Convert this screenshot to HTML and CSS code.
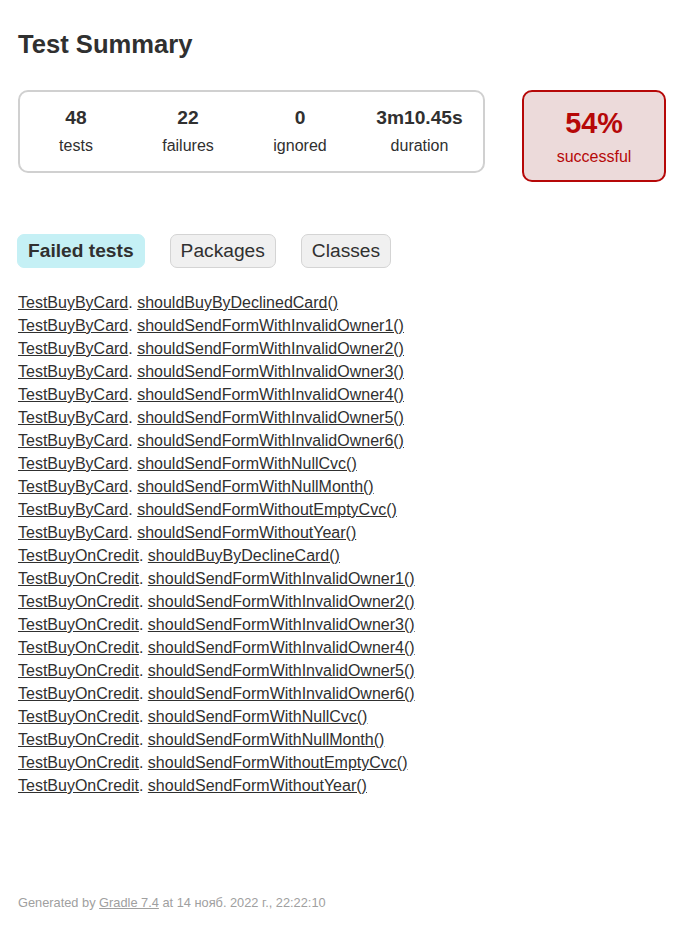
FILE: index.html
```html
<!DOCTYPE html>
<html>
<head>
<meta charset="utf-8">
<title>Test results - Test Summary</title>
<link rel="stylesheet" href="styles.css">
</head>
<body>
<div class="content">
  <h1 class="title">Test Summary</h1>
  <div class="summary">
    <div class="summary-group">
      <div class="info-box"><div class="counter">48</div><p class="label">tests</p></div>
      <div class="info-box"><div class="counter">22</div><p class="label">failures</p></div>
      <div class="info-box"><div class="counter">0</div><p class="label">ignored</p></div>
      <div class="info-box info-duration"><div class="counter">3m10.45s</div><p class="label">duration</p></div>
    </div>
    <div class="success-rate">
      <div class="percent">54%</div>
      <p class="label">successful</p>
    </div>
  </div>
  <ul class="tab-links">
    <li class="tab tab-selected"><a href="#tab0">Failed tests</a></li>
    <li class="tab"><a href="#tab1">Packages</a></li>
    <li class="tab"><a href="#tab2">Classes</a></li>
  </ul>
  <ul class="link-list">
    <li><a href="#">TestBuyByCard</a>. <a href="#">shouldBuyByDeclinedCard()</a></li>
    <li><a href="#">TestBuyByCard</a>. <a href="#">shouldSendFormWithInvalidOwner1()</a></li>
    <li><a href="#">TestBuyByCard</a>. <a href="#">shouldSendFormWithInvalidOwner2()</a></li>
    <li><a href="#">TestBuyByCard</a>. <a href="#">shouldSendFormWithInvalidOwner3()</a></li>
    <li><a href="#">TestBuyByCard</a>. <a href="#">shouldSendFormWithInvalidOwner4()</a></li>
    <li><a href="#">TestBuyByCard</a>. <a href="#">shouldSendFormWithInvalidOwner5()</a></li>
    <li><a href="#">TestBuyByCard</a>. <a href="#">shouldSendFormWithInvalidOwner6()</a></li>
    <li><a href="#">TestBuyByCard</a>. <a href="#">shouldSendFormWithNullCvc()</a></li>
    <li><a href="#">TestBuyByCard</a>. <a href="#">shouldSendFormWithNullMonth()</a></li>
    <li><a href="#">TestBuyByCard</a>. <a href="#">shouldSendFormWithoutEmptyCvc()</a></li>
    <li><a href="#">TestBuyByCard</a>. <a href="#">shouldSendFormWithoutYear()</a></li>
    <li><a href="#">TestBuyOnCredit</a>. <a href="#">shouldBuyByDeclineCard()</a></li>
    <li><a href="#">TestBuyOnCredit</a>. <a href="#">shouldSendFormWithInvalidOwner1()</a></li>
    <li><a href="#">TestBuyOnCredit</a>. <a href="#">shouldSendFormWithInvalidOwner2()</a></li>
    <li><a href="#">TestBuyOnCredit</a>. <a href="#">shouldSendFormWithInvalidOwner3()</a></li>
    <li><a href="#">TestBuyOnCredit</a>. <a href="#">shouldSendFormWithInvalidOwner4()</a></li>
    <li><a href="#">TestBuyOnCredit</a>. <a href="#">shouldSendFormWithInvalidOwner5()</a></li>
    <li><a href="#">TestBuyOnCredit</a>. <a href="#">shouldSendFormWithInvalidOwner6()</a></li>
    <li><a href="#">TestBuyOnCredit</a>. <a href="#">shouldSendFormWithNullCvc()</a></li>
    <li><a href="#">TestBuyOnCredit</a>. <a href="#">shouldSendFormWithNullMonth()</a></li>
    <li><a href="#">TestBuyOnCredit</a>. <a href="#">shouldSendFormWithoutEmptyCvc()</a></li>
    <li><a href="#">TestBuyOnCredit</a>. <a href="#">shouldSendFormWithoutYear()</a></li>
  </ul>
  <div class="footer">Generated by <a href="#">Gradle 7.4</a> at 14 нояб. 2022 г., 22:22:10</div>
</div>
</body>
</html>
```

FILE: styles.css
```css
html, body {
  margin: 0;
  padding: 0;
  background: #ffffff;
}
body {
  font-family: "Liberation Sans", Arial, sans-serif;
  font-size: 16px;
  line-height: 18px;
  color: #303030;
}
a, a:visited {
  color: #303030;
}
.content {
  padding: 0 18px;
}
.title {
  margin: 29px 0 0 0;
  font-size: 25.6px;
  line-height: 30px;
  font-weight: bold;
  white-space: nowrap;
}
.summary {
  display: flex;
  align-items: flex-start;
  margin-top: 31px;
}
.summary-group {
  display: flex;
  border: 2px solid #d0d0d0;
  border-radius: 10px;
  width: 463px;
}
.info-box {
  width: 112px;
  padding: 15px 0 16px 0;
  text-align: center;
}
.info-duration {
  width: 127px;
}
.counter {
  font-size: 19.2px;
  line-height: 22px;
  font-weight: bold;
  margin-bottom: 8px;
}
.label {
  margin: 0;
}
.success-rate {
  width: 140px;
  margin-left: 37px;
  padding: 15px 0 14px 0;
  text-align: center;
  border: 2px solid #b60808;
  border-radius: 10px;
  background: #ecdada;
  color: #b60808;
}
.percent {
  font-size: 28.8px;
  line-height: 33px;
  font-weight: bold;
  margin-bottom: 8px;
}
.tab-links {
  display: flex;
  list-style: none;
  margin: 52px 0 0 -1px;
  padding: 0;
}
.tab {
  padding: 5px 10px;
  margin-right: 25px;
  border: 1px solid #d4d4d4;
  border-radius: 7px;
  background: #f0f0f0;
}
.tab a {
  display: block;
  font-size: 19.2px;
  line-height: 22px;
  text-decoration: none;
}
.tab-selected {
  background: #c5f0f5;
  border-color: #c5f0f5;
}
.tab-selected a {
  font-weight: bold;
}
.link-list {
  list-style: none;
  margin: 26px 0 0 0;
  padding: 0;
}
.link-list li {
  margin-bottom: 5px;
  white-space: nowrap;
}
.footer {
  margin-top: 100px;
  font-size: 12.8px;
  line-height: 15px;
  color: #a0a0a0;
  white-space: nowrap;
}
.footer a, .footer a:visited {
  color: #a0a0a0;
}
```
